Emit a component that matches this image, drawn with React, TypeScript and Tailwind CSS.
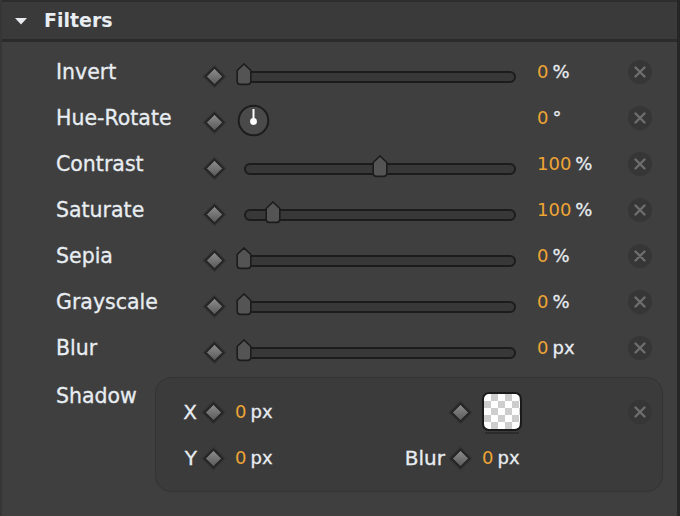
import React from 'react';

const FONT = { fontFamily: '"DejaVu Sans", "Liberation Sans", sans-serif' };

interface Filter {
    name: string;
    kind: 'slider' | 'dial';
    value: number;
    unit: string;
    pos: number; // 0..1 along the track
}

const filters: Filter[] = [
    { name: 'Invert', kind: 'slider', value: 0, unit: '%', pos: 0 },
    { name: 'Hue-Rotate', kind: 'dial', value: 0, unit: '°', pos: 0 },
    { name: 'Contrast', kind: 'slider', value: 100, unit: '%', pos: 0.5 },
    { name: 'Saturate', kind: 'slider', value: 100, unit: '%', pos: 0.105 },
    { name: 'Sepia', kind: 'slider', value: 0, unit: '%', pos: 0 },
    { name: 'Grayscale', kind: 'slider', value: 0, unit: '%', pos: 0 },
    { name: 'Blur', kind: 'slider', value: 0, unit: 'px', pos: 0 },
];

const label = "text-[#e8edf2] [-webkit-text-stroke:0.3px_#e8edf2]";

// keyframe toggle: a grey diamond with a dark rim
function Keyframe({ low }: { low?: boolean }) {
    return (
        <div className={`w-[22px] h-[22px] shrink-0 flex items-center justify-center ${low ? 'mt-[8px]' : ''}`}>
            <div className="w-[15px] h-[15px] rotate-45 border-2 border-[#262626] bg-[linear-gradient(135deg,#8c8c8c,#5a5a5a)] shadow-[0_0_1px_1px_rgba(40,40,40,0.35)]" />
        </div>
    );
}

function CloseBtn() {
    return (
        <div className="w-6 h-6 rounded-full bg-[#363636] flex items-center justify-center shrink-0">
            <svg width="12" height="12" viewBox="0 0 12 12">
                <path d="M1.5 1.5 L10.5 10.5 M10.5 1.5 L1.5 10.5" stroke="#6e6e6e" strokeWidth="2.4" strokeLinecap="round" />
            </svg>
        </div>
    );
}

function Slider({ pos }: { pos: number }) {
    return (
        <div className="relative w-[280px] h-[23px] mt-[4px] shrink-0">
            <div className="absolute left-[8px] right-0 bottom-[3px] h-[12px] rounded-full border-2 border-[#1c1c1c] bg-[#383838]" />
            <svg
                width="16"
                height="23"
                viewBox="0 0 16 23"
                className="absolute top-0"
                style={{ left: `${pos * 272}px` }}
            >
                <path d="M1.2 7.5 L8 1 L14.8 7.5 V18.2 Q14.8 21.4 11.6 21.4 H4.4 Q1.2 21.4 1.2 18.2 Z" fill="#545454" stroke="#1c1c1c" strokeWidth="1.6" />
            </svg>
        </div>
    );
}

function Dial() {
    return (
        <div className="w-[280px] shrink-0 flex">
            <svg width="33" height="33" viewBox="0 0 33 33" className="ml-[1px] mt-[5px]">
                <circle cx="16.5" cy="16.5" r="14.8" fill="#4a4a4a" stroke="#1d1d1d" strokeWidth="2" />
                <line x1="16.5" y1="16.5" x2="16.5" y2="5" stroke="#ffffff" strokeWidth="2" />
                <circle cx="16.5" cy="17.5" r="3.4" fill="#ffffff" />
            </svg>
        </div>
    );
}

function Value({ value, unit }: { value: number; unit: string }) {
    return (
        <div className="flex items-baseline text-[18px] leading-none" style={FONT}>
            <span className="text-[#eea535]">{value}</span>
            <span className={`ml-[4px] ${label}`}>{unit}</span>
        </div>
    );
}

function FilterRow({ f }: { f: Filter }) {
    return (
        <div className="flex items-center h-[46px] pl-[54px]">
            <div className={`w-[150px] text-[20.5px] ${label}`} style={FONT}>{f.name}</div>
            <div className="-ml-[3px] flex"><Keyframe low /></div>
            <div className="ml-[11px]">
                {f.kind === 'slider' ? <Slider pos={f.pos} /> : <Dial />}
            </div>
            <div className="ml-[21px] w-[91px]">
                <Value value={f.value} unit={f.unit} />
            </div>
            <CloseBtn />
        </div>
    );
}

function Swatch() {
    return (
        <div className="flex flex-col items-center">
            <div className="w-[40px] h-[39px] rounded-[7px] border-2 border-[#1a1a1a] overflow-hidden bg-[#ffffff] bg-[linear-gradient(45deg,#cdcdcd_25%,transparent_25%,transparent_75%,#cdcdcd_75%),linear-gradient(45deg,#cdcdcd_25%,transparent_25%,transparent_75%,#cdcdcd_75%)] bg-[length:14px_14px] bg-[position:0_0,7px_7px]" />
            <div className="w-[34px] h-[2px] mt-[1px] bg-[#2c2c2c]" />
        </div>
    );
}

function ShadowRow() {
    return (
        <div className="flex pl-[54px] mt-[6px]">
            <div className={`w-[99px] mt-[4px] text-[20.5px] ${label}`} style={FONT}>Shadow</div>
            <div className="w-[508px] h-[115px] rounded-[16px] border border-[#343434] bg-[#3b3b3b] pt-[11px] flex flex-col" style={FONT}>
                <div className="flex items-center h-[46px]">
                    <div className={`w-[41px] text-right text-[20px] ${label}`}>X</div>
                    <div className="ml-[5px] flex"><Keyframe /></div>
                    <div className="ml-[11px] w-[66px]"><Value value={0} unit="px" /></div>
                    <div className="w-[144px]" />
                    <div className="ml-[4px] flex"><Keyframe /></div>
                    <div className="ml-[11px] mt-[2px]"><Swatch /></div>
                    <div className="flex-1" />
                    <div className="mr-[10px]"><CloseBtn /></div>
                </div>
                <div className="flex items-center h-[46px]">
                    <div className={`w-[41px] text-right text-[20px] ${label}`}>Y</div>
                    <div className="ml-[5px] flex"><Keyframe /></div>
                    <div className="ml-[11px] w-[66px]"><Value value={0} unit="px" /></div>
                    <div className={`w-[144px] text-right text-[20px] ${label}`}>Blur</div>
                    <div className="ml-[4px] flex"><Keyframe /></div>
                    <div className="ml-[11px]"><Value value={0} unit="px" /></div>
                </div>
            </div>
        </div>
    );
}

export default function App() {
    return (
        <div className="w-[680px] h-[516px] overflow-hidden bg-[#3f3f3f] border-l-2 border-l-[#363636] border-r-[3px] border-r-[#262626] flex flex-col">
            <div className="h-[42px] shrink-0 bg-[#3a3a3a] border-t-2 border-t-[#2d2d2d] border-b-[3px] border-b-[#2b2b2b] flex items-center">
                <svg width="14" height="10" viewBox="0 0 14 10" className="ml-[12px] mt-[1px]">
                    <polygon points="1,2 13,2 7,8.5" fill="#e8ecf0" />
                </svg>
                <div className="ml-[16px] text-[19px] font-bold text-[#e8edf2]" style={FONT}>Filters</div>
            </div>
            <div className="pt-[7px] flex flex-col">
                {filters.map(f => (
                    <FilterRow key={f.name} f={f} />
                ))}
                <ShadowRow />
            </div>
        </div>
    );
}
